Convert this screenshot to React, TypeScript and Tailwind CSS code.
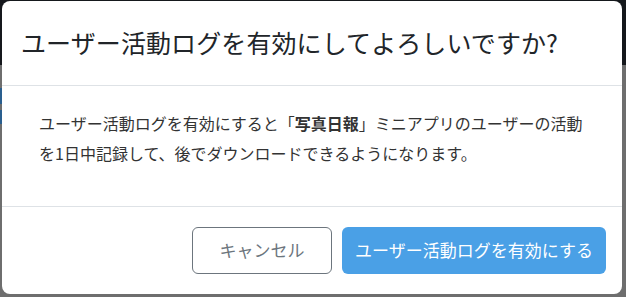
export default function App() {
  return (
    <div className="relative w-[626px] h-[297px] overflow-hidden bg-[#6e6e6e] font-['Noto_Sans_CJK_JP','Noto_Sans',sans-serif]">
      {/* page behind the backdrop */}
      <div className="h-[65px] bg-[#15181c]" />
      <div className="flex flex-col gap-[6px] pt-[23px]">
        <div className="w-[3px] h-[16px] bg-[#2a5f8f]" />
        <div className="w-[3px] h-[14px] bg-[#2a5f8f]" />
      </div>

      <div className="absolute left-[2px] top-[1px] w-[620px] h-[293px] bg-white rounded-[8px] flex flex-col">
        <div className="h-[85px] flex items-center px-[19px] border-b border-[#dee2e6]">
          <h2 className="text-[25px] font-normal text-[#212529] tracking-[0.1px] leading-none -mt-[2px]">
            ユーザー活動ログを有効にしてよろしいですか?
          </h2>
        </div>

        <div className="h-[121px] px-[37px] pt-[22px] border-b border-[#dee2e6]">
          <p className="text-[16px] leading-[30px] text-[#333333]">
            ユーザー活動ログを有効にすると「<span className="font-bold">写真日報</span>」ミニアプリのユーザーの活動を1日中記録して、後でダウンロードできるようになります。
          </p>
        </div>

        <div className="flex-1 flex items-center justify-end gap-[10px] px-[16px] pb-[1px]">
          <button className="h-[47px] w-[140px] rounded-[6px] border border-[#6c757d] text-[#6c757d] text-[17px] bg-white">
            キャンセル
          </button>
          <button className="h-[47px] w-[264px] rounded-[6px] bg-[#4aa0e6] text-white text-[17px]">
            ユーザー活動ログを有効にする
          </button>
        </div>
      </div>
    </div>
  );
}
